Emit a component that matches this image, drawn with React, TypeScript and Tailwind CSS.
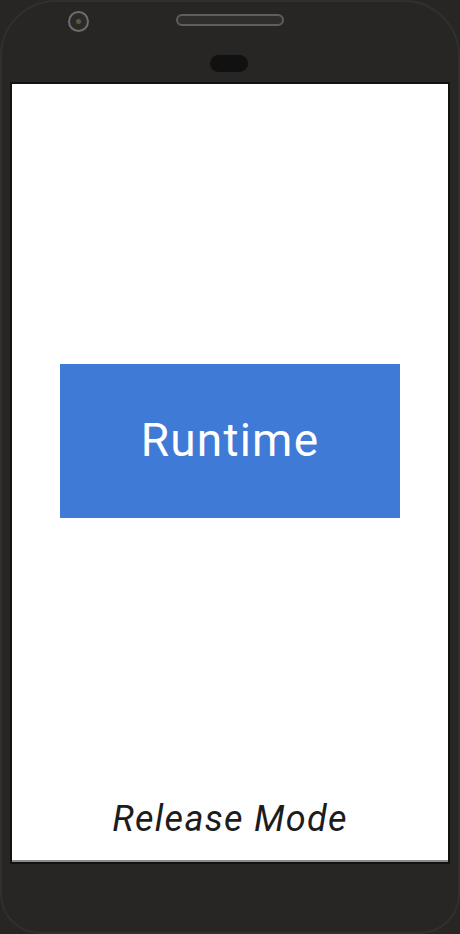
import React from "react";

export default function App() {
  return (
    <div className="relative w-[460px] h-[934px] overflow-hidden bg-[#272625]">
      {/* phone rim */}
      <div className="absolute inset-0 rounded-t-[56px] rounded-b-[40px] border-[2px] border-[#31302f] pointer-events-none" />
      {/* camera */}
      <div className="absolute left-[68px] top-[11px] w-[21px] h-[21px] rounded-full border-[2px] border-[#6e6d6b] bg-[#2c2b29] flex items-center justify-center">
        <div className="w-[5px] h-[5px] rounded-full bg-[#5b5a3c]" />
      </div>
      {/* speaker */}
      <div className="absolute left-[176px] top-[14px] w-[108px] h-[12px] rounded-full border-[2px] border-[#5f5e5c] bg-[#2f2e2c]" />
      {/* sensor */}
      <div className="absolute left-[210px] top-[55px] w-[38px] h-[17px] rounded-full bg-[#111112]" />

      <div className="pt-[82px] pl-[10px]">
        <div className="w-[440px] h-[782px] border-[2px] border-[#121212] bg-white flex flex-col">
          <div className="flex-1 flex flex-col border-b-[2px] border-[#8d8d8d]">
            <div className="h-[280px]" />
            <div className="ml-[48px] w-[340px] h-[154px] bg-[#3f7ad6] flex items-center justify-center">
              <span
                className="text-white text-[46px] leading-none tracking-[1.2px] pb-[2px]"
                style={{ fontFamily: "Roboto, 'Open Sans', sans-serif" }}
              >
                Runtime
              </span>
            </div>
            <div className="flex-1" />
            <div className="flex justify-center pb-[23px]">
              <span
                className="italic text-[#1c1c1c] text-[36px] leading-none tracking-[1.3px]"
                style={{ fontFamily: "Roboto, 'Open Sans', sans-serif" }}
              >
                Release Mode
              </span>
            </div>
          </div>
        </div>
      </div>
    </div>
  );
}
